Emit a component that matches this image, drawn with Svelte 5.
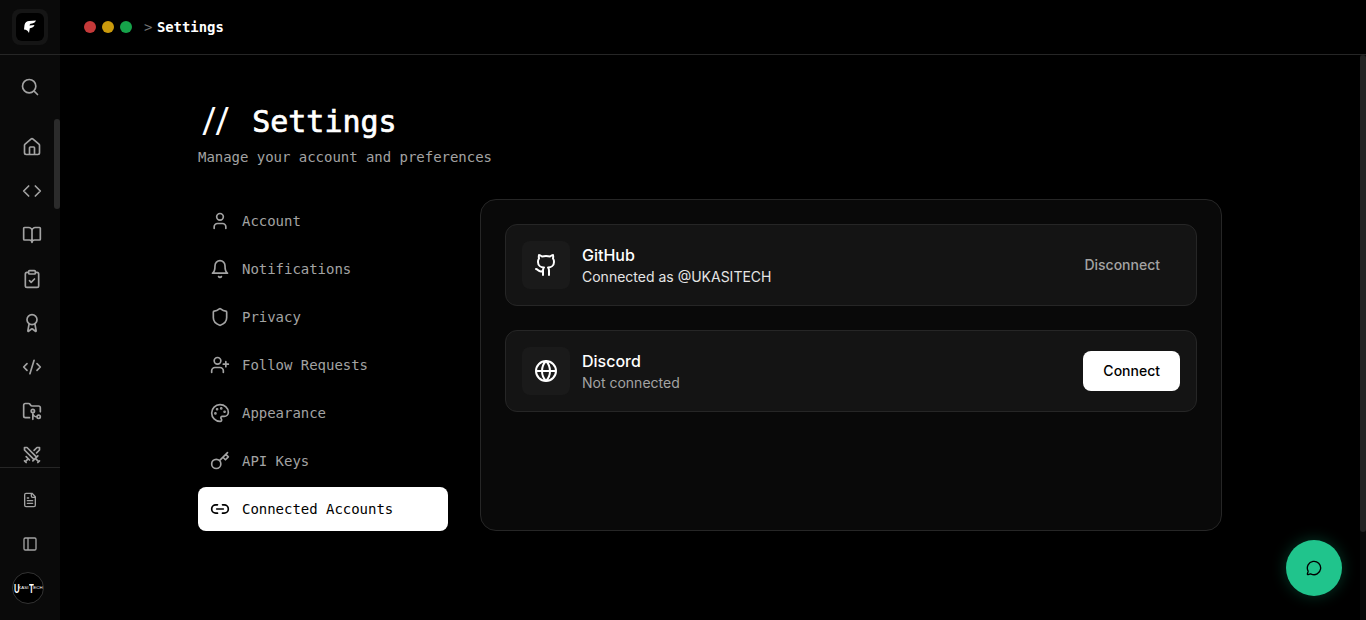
<script>
  const navIcons = [
    { label: 'Account', d: 'M19 21v-2a4 4 0 0 0-4-4H9a4 4 0 0 0-4 4v2M12 11a4 4 0 1 0 0-8 4 4 0 0 0 0 8z' },
    { label: 'Notifications', d: 'M10.3 21a1.94 1.94 0 0 0 3.4 0M6 8a6 6 0 0 1 12 0c0 7 3 9 3 9H3s3-2 3-9' },
    { label: 'Privacy', d: 'M20 13c0 5-3.5 7.5-7.66 8.95a1 1 0 0 1-.67-.01C7.5 20.5 4 18 4 13V6a1 1 0 0 1 1-1c2 0 4.5-1.2 6.24-2.72a1.17 1.17 0 0 1 1.52 0C14.51 3.81 17 5 19 5a1 1 0 0 1 1 1z' },
    { label: 'Follow Requests', d: 'M16 21v-2a4 4 0 0 0-4-4H6a4 4 0 0 0-4 4v2M9 11a4 4 0 1 0 0-8 4 4 0 0 0 0 8zM19 8v6M22 11h-6' },
    { label: 'Appearance', d: 'M12 22a1 1 0 0 1 0-20 10 9 0 0 1 10 9 5 5 0 0 1-5 5h-2.25a1.75 1.75 0 0 0-1.4 2.8l.3.4a1.75 1.75 0 0 1-1.4 2.8z', dots: [[13.5, 6.5], [17.5, 10.5], [6.5, 12.5], [8.5, 7.5]] },
    { label: 'API Keys', d: 'm15.5 7.5 3 3L22 7l-3-3M21 2l-9.6 9.6M15.5 7.5 12 11M7.5 21a5.5 5.5 0 1 0 0-11 5.5 5.5 0 0 0 0 11z' },
    { label: 'Connected Accounts', d: 'M9 17H7A5 5 0 0 1 7 7h2M15 7h2a5 5 0 1 1 0 10h-2M8 12h8', active: true }
  ];
  const side = [
    'M15 21v-8a1 1 0 0 0-1-1h-4a1 1 0 0 0-1 1v8M3 10a2 2 0 0 1 .71-1.53l7-6a2 2 0 0 1 2.58 0l7 6A2 2 0 0 1 21 10v9a2 2 0 0 1-2 2H5a2 2 0 0 1-2-2z',
    'M8 6l-6 6 6 6M16 6l6 6-6 6',
    'M12 7v14M3 18a1 1 0 0 1-1-1V4a1 1 0 0 1 1-1h5a4 4 0 0 1 4 4 4 4 0 0 1 4-4h5a1 1 0 0 1 1 1v13a1 1 0 0 1-1 1h-6a3 3 0 0 0-3 3 3 3 0 0 0-3-3z',
    'M9 2h6a1 1 0 0 1 1 1v2a1 1 0 0 1-1 1H9a1 1 0 0 1-1-1V3a1 1 0 0 1 1-1zM16 4h2a2 2 0 0 1 2 2v14a2 2 0 0 1-2 2H6a2 2 0 0 1-2-2V6a2 2 0 0 1 2-2h2M9 14l2 2 4-4',
    'm15.477 12.89 1.515 8.526a.5.5 0 0 1-.81.47l-3.58-2.687a1 1 0 0 0-1.197 0l-3.586 2.686a.5.5 0 0 1-.81-.469l1.514-8.526M12 14a6 6 0 1 0 0-12 6 6 0 0 0 0 12z',
    'm18 16 4-4-4-4M6 8l-4 4 4 4M14.5 4l-5 16',
    'M9 20H4a2 2 0 0 1-2-2V5a2 2 0 0 1 2-2h3.9a2 2 0 0 1 1.69.9l.81 1.2a2 2 0 0 0 1.67.9H20a2 2 0 0 1 2 2v5M13 10a2 2 0 1 0 0 4 2 2 0 0 0 0-4zM20 17a2 2 0 1 0 0 4 2 2 0 0 0 0-4zM18 19c-2.8 0-5-2.2-5-5v8',
    'M14.5 17.5 3 6V3h3l11.5 11.5M13 19l6-6M16 16l4 4M19 21l2-2M14.5 6.5 18 3h3v3l-3.5 3.5M5 14l4 4M7 17l-3 3M3 19l2 2'
  ];
</script>

<div class="shell">
  <aside class="rail">
    <div class="rail-top">
      <div class="logo-wrap">
        <div class="logo">
          <svg viewBox="0 0 14 14" width="14" height="14" aria-hidden="true"><path d="M1.5 5C2 2.5 4 1 6 1L13 .6C12.5 2.2 11 3.3 9.2 3.5L7.5 3.8C7 4.2 6.6 4.8 6.5 5.5L11.5 5C11 6.6 9.8 7.6 8 8L6.8 8.3 6 13C5 11.2 4 10.2 2.6 9.8L1 9.5z" fill="#fff"/></svg>
        </div>
      </div>
    </div>
    <div class="rail-search">
      <svg class="ic" viewBox="0 0 24 24" width="20" height="20" aria-hidden="true"><path d="m21 21-4.34-4.34M11 19a8 8 0 1 0 0-16 8 8 0 0 0 0 16z"/></svg>
    </div>
    <div class="rail-scroll">
      <div class="rail-list">
        {#each side as d}
          <div class="rail-item"><svg class="ic" viewBox="0 0 24 24" width="20" height="20" aria-hidden="true"><path {d}/></svg></div>
        {/each}
      </div>
      <div class="rail-thumb"></div>
    </div>
    <div class="rail-bottom">
      <div class="rail-item b"><svg class="ic" viewBox="0 0 24 24" width="16" height="16" aria-hidden="true"><path d="M15 2H6a2 2 0 0 0-2 2v16a2 2 0 0 0 2 2h12a2 2 0 0 0 2-2V7zM14 2v4a2 2 0 0 0 2 2h4M10 9H8M16 13H8M16 17H8"/></svg></div>
      <div class="rail-item b"><svg class="ic" viewBox="0 0 24 24" width="16" height="16" aria-hidden="true"><path d="M5 3h14a2 2 0 0 1 2 2v14a2 2 0 0 1-2 2H5a2 2 0 0 1-2-2V5a2 2 0 0 1 2-2zM9 3v18"/></svg></div>
      <div class="avatar"><span class="big">U</span><span class="small">KASI</span><span class="big">T</span><span class="small">ECH</span></div>
    </div>
  </aside>

  <div class="main">
    <header class="top">
      <div class="dots"><i class="r"></i><i class="y"></i><i class="g"></i></div>
      <div class="crumb"><span class="gt">&gt;</span> <b>Settings</b></div>
    </header>

    <div class="page">
      <div class="content">
        <h1><span class="slashes">//</span> Settings</h1>
        <p class="sub">Manage your account and preferences</p>

        <div class="cols">
          <nav>
            {#each navIcons as n}
              <div class="nav-item" class:active={n.active}>
                <svg viewBox="0 0 24 24" width="20" height="20" aria-hidden="true">
                  <path d={n.d}/>
                  {#if n.dots}{#each n.dots as p}<circle cx={p[0]} cy={p[1]} r=".6" class="dot"/>{/each}{/if}
                </svg>
                <span>{n.label}</span>
              </div>
            {/each}
          </nav>

          <section class="panel">
            <div class="acct">
              <div class="tile">
                <svg viewBox="0 0 24 24" width="24" height="24" aria-hidden="true"><path d="M15 22v-4a4.8 4.8 0 0 0-1-3.5c3 0 6-2 6-5.5.08-1.25-.27-2.48-1-3.5.28-1.15.28-2.35 0-3.5 0 0-1 0-3 1.5-2.64-.5-5.36-.5-8 0C6 2 5 2 5 2c-.3 1.15-.3 2.35 0 3.5A5.4 5.4 0 0 0 4 9c0 3.5 3 5.5 6 5.5-.39.49-.68 1.05-.85 1.65-.17.6-.22 1.23-.15 1.85v4M9 18c-4.51 2-5-2-7-2"/></svg>
              </div>
              <div class="info">
                <div class="name">GitHub</div>
                <div class="status on">Connected as @UKASITECH</div>
              </div>
              <button class="ghost">Disconnect</button>
            </div>

            <div class="acct">
              <div class="tile">
                <svg viewBox="0 0 24 24" width="24" height="24" aria-hidden="true"><path d="M12 22a10 10 0 1 0 0-20 10 10 0 0 0 0 20zM12 2a14.5 14.5 0 0 0 0 20 14.5 14.5 0 0 0 0-20M2 12h20"/></svg>
              </div>
              <div class="info">
                <div class="name">Discord</div>
                <div class="status">Not connected</div>
              </div>
              <button class="solid">Connect</button>
            </div>
          </section>
        </div>
      </div>
      <div class="page-track"><div class="page-thumb"></div></div>
    </div>
  </div>

  <button class="fab" aria-label="Open chat">
    <svg viewBox="0 0 24 24" width="16" height="16" aria-hidden="true"><path d="M2.992 16.342a2 2 0 0 1 .094 1.167l-1.065 3.29a1 1 0 0 0 1.236 1.168l3.413-.998a2 2 0 0 1 1.099.092 10 10 0 1 0-4.777-4.719"/></svg>
  </button>
</div>

<style>
  :global(body) { margin: 0; background: #000; overflow: hidden; }
  .shell { display: flex; height: 620px; width: 1366px; background: #000; color: #fff; overflow: hidden; position: relative; font-family: Inter, "Liberation Sans", sans-serif; }

  .rail { width: 60px; flex: none; background: #0a0a0a; display: flex; flex-direction: column; }
  .rail-top { height: 54px; flex: none; border-bottom: 1px solid #262626; display: flex; align-items: center; justify-content: center; }
  .logo-wrap { width: 36px; height: 36px; background: #151515; border-radius: 8px; display: flex; align-items: center; justify-content: center; }
  .logo { width: 28px; height: 28px; background: #000; border-radius: 6px; display: flex; align-items: center; justify-content: center; }
  .rail-search { height: 64px; flex: none; display: flex; align-items: center; justify-content: center; }
  .ic { fill: none; stroke: #a3a3a3; stroke-width: 2; stroke-linecap: round; stroke-linejoin: round; }
  .rail-scroll { flex: 1; min-height: 0; position: relative; overflow: hidden; }
  .rail-list { display: flex; flex-direction: column; padding-top: 6px; padding-left: 4px; }
  .rail-item { height: 44px; flex: none; display: flex; align-items: center; justify-content: center; }
  .rail-thumb { position: absolute; right: 0; top: 0; width: 6px; height: 90px; border-radius: 3px; background: #2b2b2b; }
  .rail-bottom { flex: none; height: 153px; border-top: 1px solid #262626; display: flex; flex-direction: column; align-items: center; box-sizing: border-box; padding-top: 10px; }
  .avatar { margin-top: 6px; align-self: flex-start; margin-left: 12px; width: 32px; height: 32px; border-radius: 50%; background: #000; border: 1px solid #333; box-sizing: border-box; display: flex; align-items: center; justify-content: center; font-family: "Liberation Sans", sans-serif; color: #fff; font-weight: 700; overflow: hidden; line-height: 1; }
  .avatar .big { font-size: 13px; display: inline-block; width: 5px; transform: scaleX(.6); text-align: center; flex: none; }
  .avatar .small { font-size: 4.4px; font-weight: 400; flex: none; }

  .main { flex: 1; min-width: 0; display: flex; flex-direction: column; }
  .top { height: 54px; flex: none; border-bottom: 1px solid #262626; display: flex; align-items: center; padding-left: 24px; gap: 12px; }
  .dots { display: flex; gap: 6px; }
  .dots i { width: 12px; height: 12px; border-radius: 50%; display: block; }
  .r { background: #c53a3a; } .y { background: #ca9a0c; } .g { background: #16a34a; }
  .crumb { font-family: "DejaVu Sans Mono", monospace; font-size: 14px; color: #737373; }
  .crumb .gt { font-size: 14px; letter-spacing: -4px; }
  .crumb b { color: #fff; font-weight: 700; font-size: 13.9px; }

  .page { flex: 1; min-height: 0; position: relative; }
  .content { padding: 48px 0 0 138px; width: 1024px; box-sizing: content-box; }
  h1 { margin: 0; font: 400 30px/38px "DejaVu Sans Mono", monospace; color: #fff; white-space: pre; height: 36px; -webkit-text-stroke: .7px #fff; }
  .slashes { font-weight: 700; display: inline-block; letter-spacing: -3px; margin-left: 3px; margin-right: 3px; -webkit-text-stroke: 0; transform: scale(.88, 1.1); transform-origin: 0 75%; }
  .sub { margin: 8px 0 0; font: 400 14px/20px "DejaVu Sans Mono", monospace; color: #a3a3a3; letter-spacing: -.03px; }

  .cols { display: flex; gap: 32px; margin-top: 32px; align-items: flex-start; }
  nav { width: 250px; flex: none; display: flex; flex-direction: column; gap: 4px; }
  .nav-item { height: 44px; display: flex; align-items: center; gap: 12px; padding: 0 12px; border-radius: 8px; font: 400 14px/20px "DejaVu Sans Mono", monospace; color: #a3a3a3; letter-spacing: -.03px; box-sizing: border-box; }
  .nav-item svg { fill: none; stroke: #a3a3a3; stroke-width: 2; stroke-linecap: round; stroke-linejoin: round; flex: none; }
  .nav-item .dot { fill: #a3a3a3; }
  .nav-item.active { background: #fff; color: #000; }
  .nav-item.active svg { stroke: #000; }

  .panel { flex: none; width: 742px; height: 332px; box-sizing: border-box; background: #090909; border: 1px solid #262626; border-radius: 16px; padding: 24px; display: flex; flex-direction: column; gap: 24px; }
  .acct { height: 82px; box-sizing: border-box; background: #141414; border: 1px solid #262626; border-radius: 12px; padding: 0 16px; display: flex; align-items: center; gap: 12px; }
  .tile { width: 48px; height: 48px; border-radius: 8px; background: #1a1a1a; display: flex; align-items: center; justify-content: center; flex: none; }
  .tile svg { fill: none; stroke: #fff; stroke-width: 2; stroke-linecap: round; stroke-linejoin: round; }
  .info { flex: 1; min-width: 0; }
  .name { font-size: 16px; line-height: 24px; font-weight: 500; color: #fff; }
  .status { font-size: 14px; line-height: 20px; color: #a3a3a3; }
  .status.on { color: #e5e5e5; }
  button { font-family: inherit; border: 0; cursor: pointer; }
  .ghost, .solid { height: 40px; padding: 0 20px; border-radius: 8px; font-size: 14px; line-height: 20px; font-weight: 500; background: transparent; }
  .ghost { color: #a3a3a3; padding-bottom: 1px; }
  .solid { background: #fff; color: #000; padding-bottom: 1px; }

  .page-track { position: absolute; right: 0; top: 0; bottom: 0; width: 6px; background: #0a0a0a; }
  .page-thumb { position: absolute; left: 0; right: 0; top: 0; height: 477px; background: #222; border-radius: 3px; }

  .fab { position: absolute; right: 24px; bottom: 24px; width: 56px; height: 56px; border-radius: 50%; background: #20c48c; box-shadow: 0 0 15px rgba(16,185,129,.3); display: flex; align-items: center; justify-content: center; padding: 0; }
  .fab svg { fill: none; stroke: #000; stroke-width: 2; stroke-linecap: round; stroke-linejoin: round; }
</style>
